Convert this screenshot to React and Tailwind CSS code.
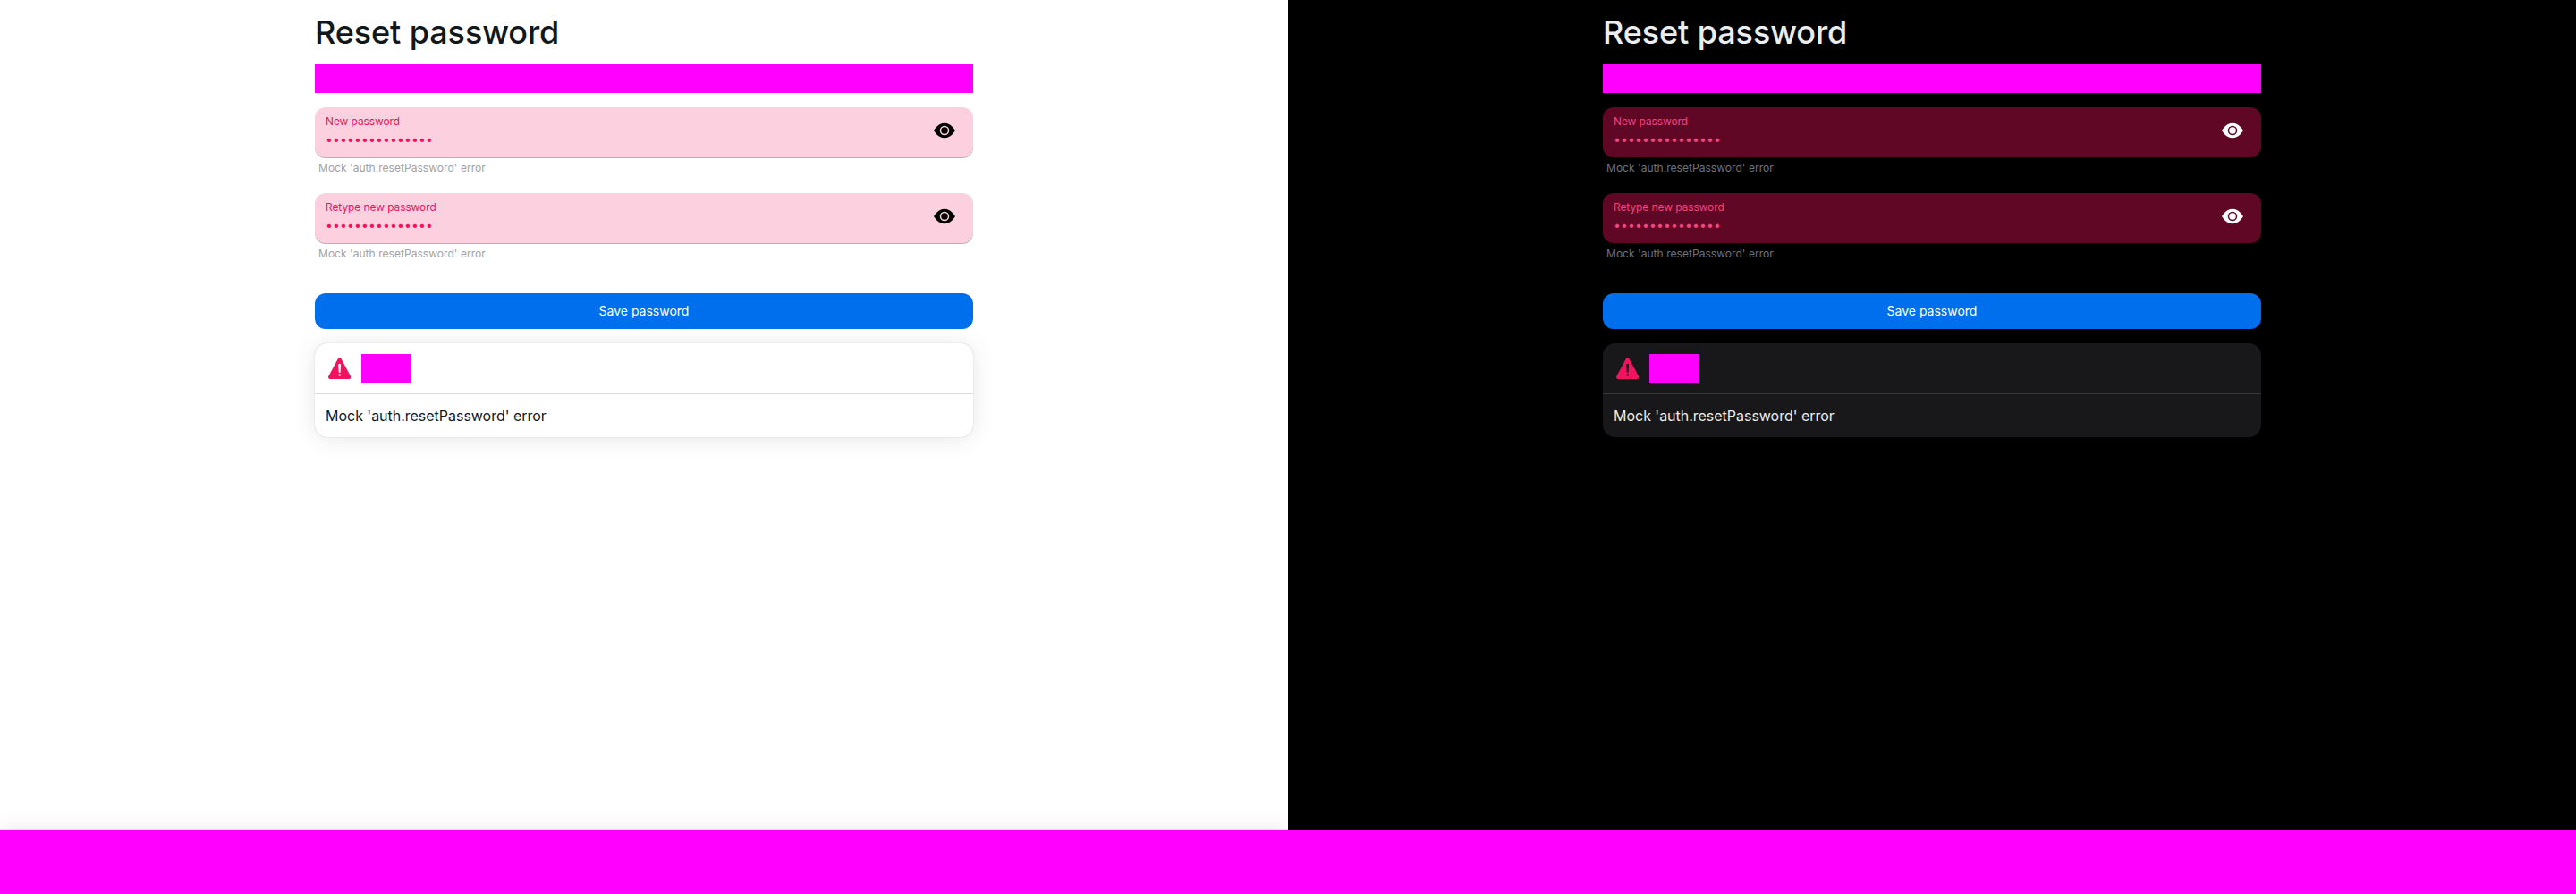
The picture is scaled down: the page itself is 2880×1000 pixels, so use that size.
import { BsEyeFill } from "react-icons/bs";
import { IoWarning } from "react-icons/io5";

const themes = {
  light: {
    page: "bg-white text-[#11181c]",
    field: "bg-[#fdd0df] text-[#f31260] shadow-[0_1px_0_0_rgba(0,0,0,0.3)]",
    hint: "text-[#a1a1aa]",
    eye: "text-black",
    card: "bg-white shadow-[0_0_15px_0_rgb(0_0_0/0.03),0_2px_30px_0_rgb(0_0_0/0.08),0_0_1px_0_rgb(0_0_0/0.3)]",
    divider: "bg-[#11111126]",
    nav: "bg-[#ff00ff] shadow-[0_0_15px_0_rgb(0_0_0/0.03),0_2px_30px_0_rgb(0_0_0/0.08),0_0_1px_0_rgb(0_0_0/0.3)]",
  },
  dark: {
    page: "bg-black text-[#ecedee]",
    field: "bg-[#610726] text-[#f54180]",
    hint: "text-[#71717a]",
    eye: "text-white",
    card: "bg-[#18181b]",
    divider: "bg-[#ffffff26]",
    nav: "bg-[#ff00ff]",
  },
};

function PasswordField({ label, theme }) {
  return (
    <div className="flex flex-col">
      <div className={`flex h-14 items-center rounded-xl pl-3 pr-5 ${theme.field}`}>
        <div className="flex grow flex-col">
          <label className="h-4 text-[11.9px] leading-3 tracking-[-0.04px]">{label}</label>
          <input
            type="password"
            defaultValue="password1234567"
            className="h-5 w-full bg-transparent text-sm tracking-[0.13px] outline-none"
          />
        </div>
        <BsEyeFill size={24} className={`mb-1 ${theme.eye}`} />
      </div>
      <p className={`p-1 text-xs tracking-[0.04px] ${theme.hint}`}>Mock 'auth.resetPassword' error</p>
    </div>
  );
}

function Screen({ theme }) {
  return (
    <section className={`flex h-[1000px] w-[1440px] flex-col overflow-hidden ${theme.page}`}>
      <main className="mx-auto flex w-[736px] grow flex-col gap-4 pt-4">
        <h1 className="text-4xl font-medium tracking-[-0.1px]">Reset password</h1>
        <div className="h-8 shrink-0 bg-[#ff00ff]" />
        <PasswordField label="New password" theme={theme} />
        <PasswordField label="Retype new password" theme={theme} />
        <button className="mt-4 h-10 shrink-0 rounded-xl bg-[#006fee] text-sm text-white">
          Save password
        </button>
        <article className={`rounded-[14px] ${theme.card}`}>
          <header className="flex h-14 items-center gap-2 px-3">
            <IoWarning size={32} className="text-[#f31260]" />
            <div className="h-8 w-14 bg-[#ff00ff]" />
          </header>
          <div className={`h-px ${theme.divider}`} />
          <p className="p-3 text-base tracking-[-0.02px]">Mock 'auth.resetPassword' error</p>
        </article>
      </main>
      <nav className={`h-[72px] shrink-0 ${theme.nav}`} />
    </section>
  );
}

export default function App() {
  return (
    <div className="flex h-[1000px] w-[2880px] font-['Inter',sans-serif]">
      <Screen theme={themes.light} />
      <Screen theme={themes.dark} />
    </div>
  );
}
